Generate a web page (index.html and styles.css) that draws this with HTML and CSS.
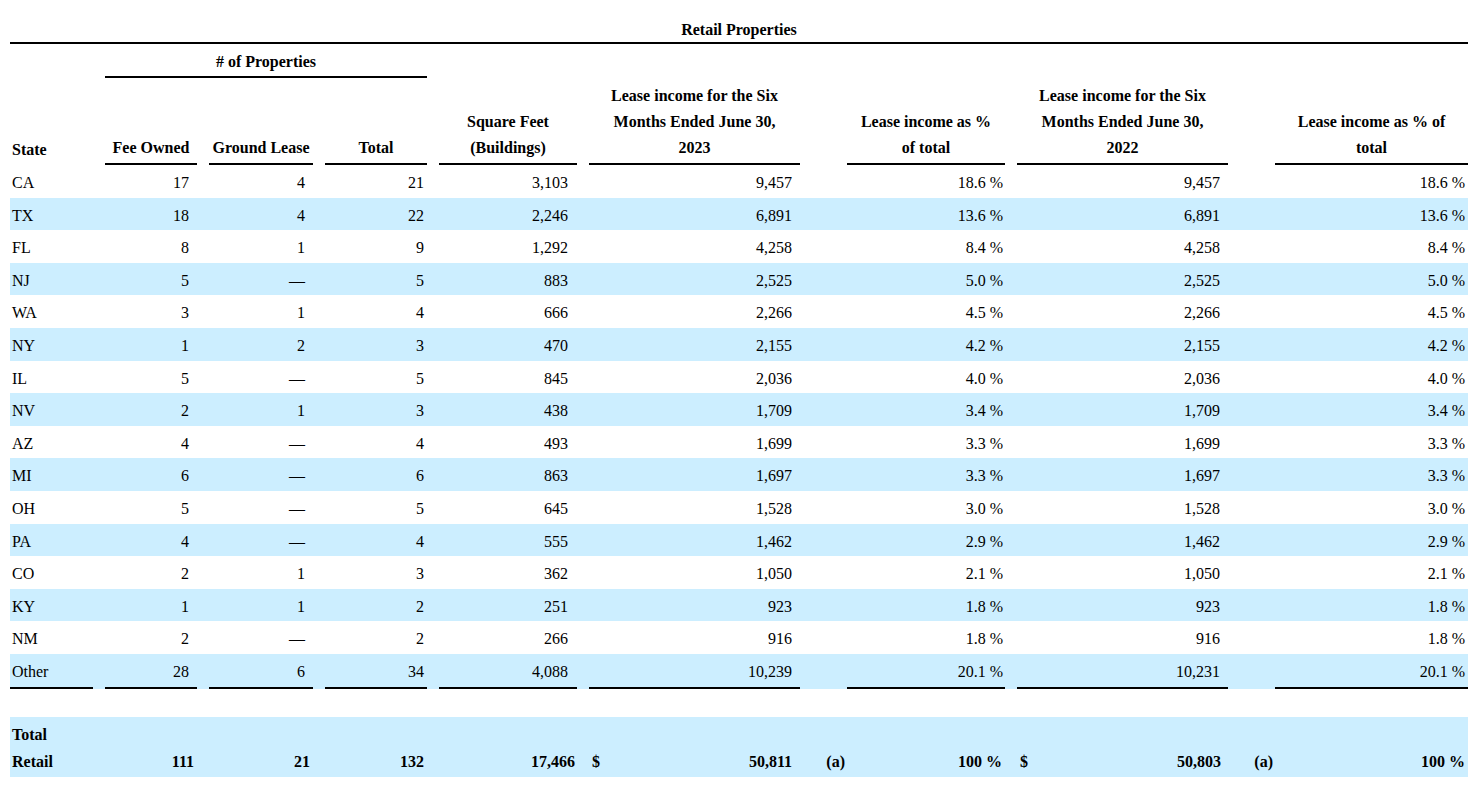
FILE: index.html
```html
<!DOCTYPE html>
<html lang="en">
<head>
<meta charset="utf-8">
<title>Retail Properties</title>
<link rel="stylesheet" href="styles.css">
</head>
<body>
<div class="page">
  <div class="table">
    <div class="title">Retail Properties</div>

    <div class="row group">
      <div class="group-label"># of Properties</div>
    </div>

    <div class="row head">
      <div class="state">State</div>
      <div class="ul">Fee Owned</div>
      <div class="ul">Ground Lease</div>
      <div class="ul">Total</div>
      <div class="ul">Square Feet<br>(Buildings)</div>
      <div class="ul">Lease income for the Six<br>Months Ended June 30,<br>2023</div>
      <div></div>
      <div class="ul">Lease income as %<br>of total</div>
      <div class="ul">Lease income for the Six<br>Months Ended June 30,<br>2022</div>
      <div></div>
      <div class="ul">Lease income as % of<br>total</div>
    </div>

    <div class="row data"><div>CA</div><div>17</div><div>4</div><div>21</div><div>3,103</div><div>9,457</div><div></div><div>18.6 %</div><div>9,457</div><div></div><div>18.6 %</div></div>
    <div class="row data alt"><div>TX</div><div>18</div><div>4</div><div>22</div><div>2,246</div><div>6,891</div><div></div><div>13.6 %</div><div>6,891</div><div></div><div>13.6 %</div></div>
    <div class="row data"><div>FL</div><div>8</div><div>1</div><div>9</div><div>1,292</div><div>4,258</div><div></div><div>8.4 %</div><div>4,258</div><div></div><div>8.4 %</div></div>
    <div class="row data alt"><div>NJ</div><div>5</div><div>—</div><div>5</div><div>883</div><div>2,525</div><div></div><div>5.0 %</div><div>2,525</div><div></div><div>5.0 %</div></div>
    <div class="row data"><div>WA</div><div>3</div><div>1</div><div>4</div><div>666</div><div>2,266</div><div></div><div>4.5 %</div><div>2,266</div><div></div><div>4.5 %</div></div>
    <div class="row data alt"><div>NY</div><div>1</div><div>2</div><div>3</div><div>470</div><div>2,155</div><div></div><div>4.2 %</div><div>2,155</div><div></div><div>4.2 %</div></div>
    <div class="row data"><div>IL</div><div>5</div><div>—</div><div>5</div><div>845</div><div>2,036</div><div></div><div>4.0 %</div><div>2,036</div><div></div><div>4.0 %</div></div>
    <div class="row data alt"><div>NV</div><div>2</div><div>1</div><div>3</div><div>438</div><div>1,709</div><div></div><div>3.4 %</div><div>1,709</div><div></div><div>3.4 %</div></div>
    <div class="row data"><div>AZ</div><div>4</div><div>—</div><div>4</div><div>493</div><div>1,699</div><div></div><div>3.3 %</div><div>1,699</div><div></div><div>3.3 %</div></div>
    <div class="row data alt"><div>MI</div><div>6</div><div>—</div><div>6</div><div>863</div><div>1,697</div><div></div><div>3.3 %</div><div>1,697</div><div></div><div>3.3 %</div></div>
    <div class="row data"><div>OH</div><div>5</div><div>—</div><div>5</div><div>645</div><div>1,528</div><div></div><div>3.0 %</div><div>1,528</div><div></div><div>3.0 %</div></div>
    <div class="row data alt"><div>PA</div><div>4</div><div>—</div><div>4</div><div>555</div><div>1,462</div><div></div><div>2.9 %</div><div>1,462</div><div></div><div>2.9 %</div></div>
    <div class="row data"><div>CO</div><div>2</div><div>1</div><div>3</div><div>362</div><div>1,050</div><div></div><div>2.1 %</div><div>1,050</div><div></div><div>2.1 %</div></div>
    <div class="row data alt"><div>KY</div><div>1</div><div>1</div><div>2</div><div>251</div><div>923</div><div></div><div>1.8 %</div><div>923</div><div></div><div>1.8 %</div></div>
    <div class="row data"><div>NM</div><div>2</div><div>—</div><div>2</div><div>266</div><div>916</div><div></div><div>1.8 %</div><div>916</div><div></div><div>1.8 %</div></div>
    <div class="row data alt last"><div>Other</div><div>28</div><div>6</div><div>34</div><div>4,088</div><div>10,239</div><div></div><div>20.1 %</div><div>10,231</div><div></div><div>20.1 %</div></div>

    <div class="row total">
      <div class="label">Total<br>Retail</div>
      <div>111</div>
      <div>21</div>
      <div>132</div>
      <div>17,466</div>
      <div class="money"><span>$</span><span>50,811</span></div>
      <div class="note">(a)</div>
      <div>100 %</div>
      <div class="money"><span>$</span><span>50,803</span></div>
      <div class="note">(a)</div>
      <div>100 %</div>
    </div>
  </div>
</div>
</body>
</html>
```

FILE: styles.css
```css
* {
  box-sizing: border-box;
}

body {
  margin: 0;
  background: #ffffff;
  color: #000000;
  font-family: "Liberation Serif", "Times New Roman", serif;
  font-size: 16px;
}

.page {
  padding: 17px 5px 0 10px;
}

.table {
  width: 1458px;
}

.title {
  text-align: center;
  font-weight: bold;
  line-height: 25px;
  border-bottom: 2px solid #000;
}

.row {
  display: grid;
  grid-template-columns: 83px 92px 104px 102px 138px 211px 23px 158px 211px 23px 193px;
  column-gap: 12px;
}

/* group header */
.group {
  padding-top: 5px;
}

.group-label {
  grid-column: 2 / 5;
  text-align: center;
  font-weight: bold;
  line-height: 26px;
  padding-bottom: 1px;
  border-bottom: 2px solid #000;
}

/* column headers */
.head {
  padding-top: 5px;
  align-items: end;
  font-weight: bold;
  line-height: 26px;
  text-align: center;
  white-space: nowrap;
}

.head > div {
  padding-bottom: 2px;
}

.head .ul {
  border-bottom: 2px solid #000;
}

.head .state {
  text-align: left;
  padding-left: 2px;
}

/* data rows */
.data {
  height: 32.6px;
  line-height: 20px;
}

.data.alt {
  background: #cceeff;
}

.data.last {
  height: 34.6px;
}

.data.last > div:not(:empty) {
  border-bottom: 2px solid #000;
}

.data > div {
  padding-top: 8px;
  text-align: right;
}

.data > div:nth-child(1) {
  text-align: left;
  padding-left: 2px;
}

.data > div:nth-child(2),
.data > div:nth-child(3),
.data > div:nth-child(6) {
  padding-right: 8px;
}

.data > div:nth-child(4) {
  padding-right: 3px;
}

.data > div:nth-child(5) {
  padding-right: 9px;
}

.data > div:nth-child(8) {
  padding-right: 2px;
}

.data > div:nth-child(9) {
  padding-right: 8px;
}

.data > div:nth-child(11) {
  padding-right: 3px;
}

/* total row */
.total {
  margin-top: 28.4px;
  padding: 4px 0 2px;
  background: #cceeff;
  font-weight: bold;
  line-height: 27px;
  align-items: end;
}

.total > div {
  text-align: right;
  padding-right: 3px;
}

.total > .label {
  text-align: left;
  padding-left: 2px;
}

.total > div:nth-child(5) {
  padding-right: 2px;
}

.total > .money {
  display: flex;
  justify-content: space-between;
  padding-left: 3px;
  padding-right: 8px;
}

.total > div:nth-child(9) {
  padding-right: 7px;
}

.total > .note {
  padding-right: 0;
  margin-right: -10px;
}
```
